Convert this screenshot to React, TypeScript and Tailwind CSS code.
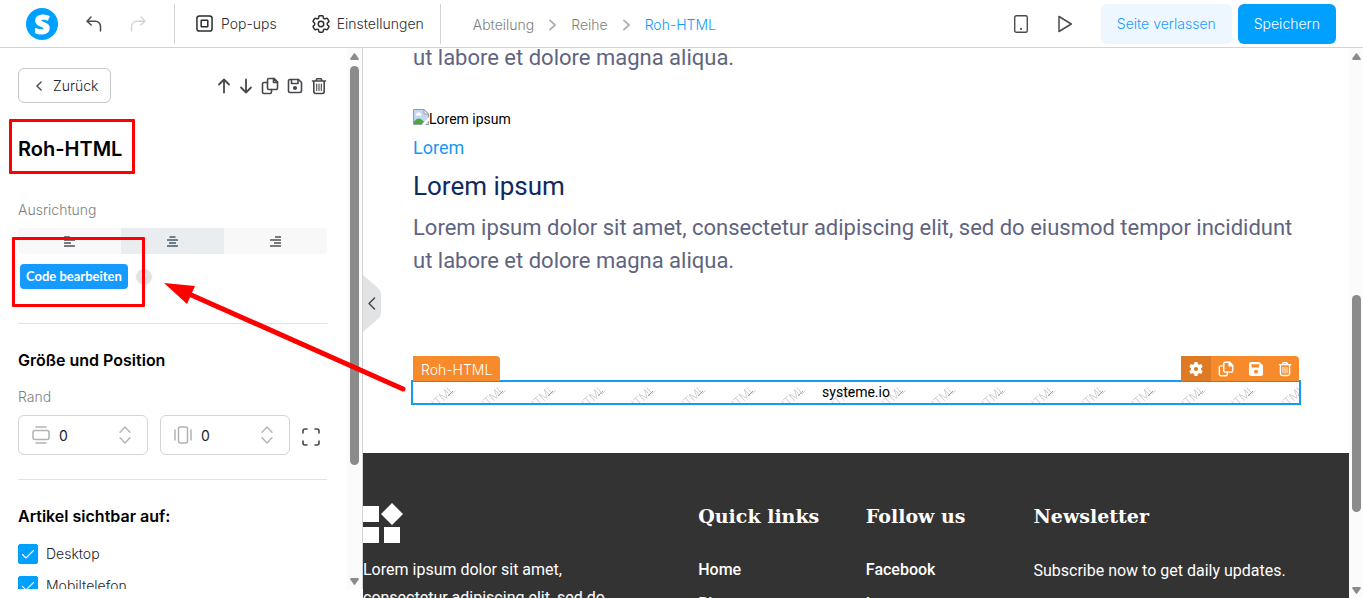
import React, { useState } from "react";

type IconProps = { className?: string };

const stroke = {
  fill: "none",
  stroke: "currentColor",
  strokeLinecap: "round" as const,
  strokeLinejoin: "round" as const,
};

function Logo() {
  return (
    <svg viewBox="0 0 32 32" className="size-8" role="img" aria-label="systeme.io">
      <circle cx="16" cy="16" r="16" fill="#00a0ff" />
      <text x="16" y="25.5" textAnchor="middle" fontFamily="Open Sans, sans-serif" fontWeight="800" fontSize="27" fill="#fff" stroke="#fff" strokeWidth="0.8">
        S
      </text>
    </svg>
  );
}

function UndoIcon({ className }: IconProps) {
  return (
    <svg viewBox="0 0 16 16" className={className} {...stroke} strokeWidth="1.5">
      <path d="M5 1 1 5.2 5.2 9M1 5.2h8.5a5 5 0 0 1 5 5V15" />
    </svg>
  );
}

function PopupIcon() {
  return (
    <svg viewBox="0 0 18 18" className="size-[17px]" {...stroke} strokeWidth="1.6">
      <rect x="1" y="1" width="16" height="16" rx="2.5" />
      <rect x="5.5" y="5.5" width="7" height="7" rx="0.5" />
    </svg>
  );
}

function GearOutline() {
  return (
    <svg viewBox="0 0 24 24" className="size-[22px]" {...stroke} strokeWidth="1.6">
      <path d="M9.6 3.9c.1-.5.6-.9 1.1-.9h2.6c.5 0 1 .4 1.1.9l.2 1.3c.1.4.3.7.6.9l.3.1c.3.2.7.3 1.1.1l1.2-.5c.5-.2 1.1 0 1.4.5l1.3 2.2c.3.5.2 1.1-.3 1.4l-1 .9c-.3.2-.4.6-.4 1v.4c0 .4.1.7.4 1l1 .8c.5.4.6 1 .3 1.4l-1.3 2.3c-.3.5-.9.7-1.4.5l-1.2-.5c-.4-.1-.8-.1-1.1.1l-.3.2c-.3.1-.5.5-.6.8l-.2 1.3c-.1.6-.6.9-1.1.9h-2.6c-.5 0-1-.3-1.1-.9l-.2-1.3c-.1-.3-.3-.7-.6-.8l-.3-.2c-.3-.2-.7-.2-1.1-.1l-1.2.5c-.5.2-1.1 0-1.4-.5l-1.3-2.3c-.3-.4-.2-1 .3-1.4l1-.8c.3-.3.4-.6.4-1v-.4c0-.4-.1-.8-.4-1l-1-.9c-.5-.3-.6-.9-.3-1.4l1.3-2.2c.3-.5.9-.7 1.4-.5l1.2.5c.4.1.8.1 1.1-.1l.3-.1c.3-.2.5-.5.6-.9z" />
      <circle cx="12" cy="12" r="3" />
    </svg>
  );
}

function Chevron({ className }: IconProps) {
  return (
    <svg viewBox="0 0 10 14" className={className} {...stroke}>
      <path d="m2 1.5 6 5.5-6 5.5" />
    </svg>
  );
}

function CopyIcon({ className }: IconProps) {
  return (
    <svg viewBox="0 0 18 18" className={className} {...stroke} strokeWidth="1.6">
      <path d="M8 1.5h5.2l3.3 3.3V11a1.5 1.5 0 0 1-1.5 1.5H8A1.5 1.5 0 0 1 6.5 11V3A1.5 1.5 0 0 1 8 1.5z" />
      <path d="M12.5 1.5v4h4zM6.5 5.5H3A1.5 1.5 0 0 0 1.5 7v8A1.5 1.5 0 0 0 3 16.5h6a1.5 1.5 0 0 0 1.5-1.5v-2.5" />
    </svg>
  );
}

function SaveIcon({ className }: IconProps) {
  return (
    <svg viewBox="0 0 16 16" className={className} {...stroke} strokeWidth="1.6">
      <path d="M3 1.5h8.5l3 3V13A1.5 1.5 0 0 1 13 14.5H3A1.5 1.5 0 0 1 1.500 13V3A1.5 1.5 0 0 1 3 1.5z" />
      <path d="M4.5 1.500v4h6.500v-4" />
      <circle cx="8" cy="10" r="1.3" fill="currentColor" />
    </svg>
  );
}

function SaveSolid() {
  return (
    <svg viewBox="0 0 16 16" className="size-4" fill="currentColor">
      <path
        fillRule="evenodd"
        d="M3 1h8.500L15 4.500V13a2 2 0 0 1-2 2H3a2 2 0 0 1-2-2V3a2 2 0 0 1 2-2zm.5 2.200v3.300h7.500V3.200zM8 8.800a2 2 0 1 0 0 4 2 2 0 0 0 0-4z"
      />
    </svg>
  );
}

function TrashIcon({ className }: IconProps) {
  return (
    <svg viewBox="0 0 16 18" className={className} {...stroke} strokeWidth="1.6">
      <path d="M1.500 4h13M5 4l.8-2.200h4.400L11 4M2.800 4v10.500a2 2 0 0 0 2 2h6.400a2 2 0 0 0 2-2V4" />
      <path d="M5.700 7v6.500M8 7v6.500M10.300 7v6.500" strokeWidth="1.1" />
    </svg>
  );
}

function GearSolid() {
  return (
    <svg viewBox="0 0 16 16" className="size-4" fill="currentColor">
      <path
        fillRule="evenodd"
        d="M6.500 1h3l.4 2 1.300.8 2-.7 1.500 2.600-1.600 1.400v1.800l1.600 1.400-1.500 2.600-2-.7-1.300.8-.4 2h-3l-.4-2-1.300-.8-2 .7-1.500-2.600 1.600-1.400V7.100L1.300 5.700l1.500-2.600 2 .7L6.100 3zM8 5.900a2.100 2.100 0 1 0 0 4.200 2.100 2.100 0 0 0 0-4.200z"
      />
    </svg>
  );
}

function AlignIcon({ side }: { side: "left" | "center" | "right" }) {
  const x = (w: number) => (side === "left" ? 0 : side === "right" ? 11 - w : (11 - w) / 2);
  return (
    <svg viewBox="0 0 11 11" className="size-[11px]" fill="currentColor">
      {[6, 11, 7, 11].map((w, i) => (
        <rect key={i} x={x(w)} y={i * 3} width={w} height="2" rx="0.5" />
      ))}
    </svg>
  );
}

function BrokenImage() {
  return (
    <svg viewBox="0 0 16 16" className="size-4">
      <path d="M.5.5H11l4.500 4.500v10.500H.5z" fill="#c3d6f5" stroke="#9a9a9a" />
      <path d="M11 .5V5h4.500z" fill="#fff" stroke="#9a9a9a" />
      <path d="M3 6.500a1.500 1.500 0 0 1 1.200-2.400 2 2 0 0 1 3.600.6 1.200 1.200 0 0 1 .2 2z" fill="#fff" />
      <path d="M1 15v-2.500q4-5 8-1.500l2 1.500L9 15z" fill="#4aa83f" />
      <path d="M8.500 16 16 8v3.500L12 16z" fill="#fff" />
    </svg>
  );
}

function Scrollbar({ before, thumb, after }: { before: string; thumb: string; after: string }) {
  return (
    <div aria-hidden="true" className="flex w-[14px] shrink-0 flex-col items-center bg-[#fbfbfb] pb-1 pt-[5px] text-[#8b8b8b]">
      <svg viewBox="0 0 9 7" className="h-[7px] w-[9px] shrink-0" fill="currentColor">
        <path d="M3.800.6a1 1 0 0 1 1.400 0L8.700 5.500Q9 7 8 7H1Q0 7 .3 5.500z" />
      </svg>
      <div className={before} />
      <div className={`w-[9px] rounded-full bg-[#8b8b8b] ${thumb}`} />
      <div className={after} />
      <svg viewBox="0 0 9 7" className="h-[7px] w-[9px] shrink-0" fill="currentColor">
        <path d="M3.800 6.400a1 1 0 0 0 1.400 0L8.700 1.500Q9 0 8 0H1Q0 0 .3 1.500z" />
      </svg>
    </div>
  );
}

function Header() {
  return (
    <header className="flex h-12 shrink-0 items-center border-b border-[#d3d3d3] bg-white pr-[27px] pl-[26px] text-sm font-light text-[#1c1d1f]">
      <Logo />
      <button aria-label="Rückgängig" className="ml-7 text-[#4a4b4d]">
        <UndoIcon className="size-4" />
      </button>
      <button aria-label="Wiederholen" className="ml-7 text-[#d5d6d7]">
        <UndoIcon className="size-4 -scale-x-100" />
      </button>
      <div className="ml-7 h-10 w-px bg-[#d3d3d3]" />
      <button className="ml-[21px] flex items-center gap-2 text-[#2c2d2f]">
        <PopupIcon />
        Pop-ups
      </button>
      <button className="ml-[33px] flex items-center gap-[5px] text-[#2c2d2f]">
        <GearOutline />
        Einstellungen
      </button>
      <div className="ml-4 h-10 w-px bg-[#d3d3d3]" />
      <nav aria-label="Pfad" className="ml-8 flex items-center gap-[14px] pt-0.5 text-[#7e7f80]">
        <a href="#abteilung">Abteilung</a>
        <Chevron className="h-3 w-[9px] stroke-2 text-[#adaeaf]" />
        <a href="#reihe">Reihe</a>
        <Chevron className="h-3 w-[9px] stroke-2 text-[#adaeaf]" />
        <a href="#roh-html" className="text-[#0a9bff]">
          Roh-HTML
        </a>
      </nav>
      <div className="ml-auto flex items-center">
        <button aria-label="Mobile Ansicht" className="text-[#4a4b4d]">
          <svg viewBox="0 0 14 18" className="h-[18px] w-[14px]" {...stroke} strokeWidth="1.4">
            <rect x="0.7" y="0.7" width="12.6" height="16.6" rx="1.6" />
            <path d="M7 13.800v.1" strokeWidth="2" />
          </svg>
        </button>
        <button aria-label="Vorschau" className="ml-[30px] text-[#4a4b4d]">
          <svg viewBox="0 0 14 18" className="h-[18px] w-[14px]" {...stroke} strokeWidth="1.5">
            <path d="M1 1.500v15L13.300 9z" />
          </svg>
        </button>
        <button className="ml-[29px] h-10 rounded-md bg-[#eef7ff] px-4 text-[#1a9cff]">Seite verlassen</button>
        <button className="ml-[6px] h-10 rounded-md bg-[#00a0ff] px-4 text-white">Speichern</button>
      </div>
    </header>
  );
}

function NumberField({ label, vertical }: { label: string; vertical?: boolean }) {
  const [value, setValue] = useState(0);
  return (
    <div className="flex h-10 w-[130px] items-center rounded-md border border-[#d3d4d5] pr-4 pl-[13px] text-[#b1b2b4]">
      <svg viewBox="0 0 18 18" className={vertical ? "size-[18px] shrink-0 rotate-90" : "size-[18px] shrink-0"} {...stroke} strokeWidth="1.5">
        <rect x="1" y="4.500" width="16" height="9" rx="2" />
        <path d="M4 1h10M4 17h10" />
      </svg>
      <input
        aria-label={label}
        type="text"
        inputMode="numeric"
        value={value}
        onChange={(e) => setValue(Number(e.target.value) || 0)}
        className="ml-[9px] w-0 min-w-0 flex-1 bg-transparent pt-0.5 text-sm text-[#1c1d1f] outline-none"
      />
      <div className="flex flex-col gap-1">
        <button aria-label={`${label} erhöhen`} onClick={() => setValue(value + 1)}>
          <svg viewBox="0 0 12 7" className="h-[7px] w-3" {...stroke} strokeWidth="1.3">
            <path d="M1 6.300 6 1l5 5.300" />
          </svg>
        </button>
        <button aria-label={`${label} verringern`} onClick={() => setValue(value - 1)}>
          <svg viewBox="0 0 12 7" className="h-[7px] w-3" {...stroke} strokeWidth="1.3">
            <path d="M1 .7 6 6l5-5.300" />
          </svg>
        </button>
      </div>
    </div>
  );
}

function CheckRow({ label }: { label: string }) {
  return (
    <label className="flex items-center gap-2 text-sm font-light text-[#1c1d1f]">
      <span className="grid size-5 shrink-0">
        <input type="checkbox" defaultChecked className="peer col-start-1 row-start-1 size-5 appearance-none rounded-[2px] border border-[#00a0ff] checked:bg-[#00a0ff]" />
        <svg viewBox="0 0 20 20" className="pointer-events-none invisible col-start-1 row-start-1 size-5 text-white peer-checked:visible" {...stroke} strokeWidth="1.1">
          <path d="m4.500 10.500 3.500 3.500 7.500-7.500" />
        </svg>
      </span>
      {label}
    </label>
  );
}

function Sidebar() {
  return (
    <aside className="mb-[9px] flex w-[363px] shrink-0 overflow-hidden border-r border-[#d3d3d3] bg-white pr-px">
      <div className="min-w-0 flex-1 pt-5 pr-5 pl-[18px]">
        <div className="flex items-center justify-between">
          <button className="flex h-[35px] items-center gap-[10px] rounded-md border border-[#c6c7c9] pr-3 pl-4 text-sm font-light text-[#1c1d1f]">
            <Chevron className="h-[10px] w-[8px] rotate-180 stroke-2 text-[#4a4b4d]" />
            Zurück
          </button>
          <div className="flex items-center gap-2 text-[#47484b]">
            <button aria-label="Nach oben">
              <svg viewBox="0 0 14 16" className="h-4 w-[14px]" {...stroke} strokeWidth="1.8">
                <path d="M7 14.500v-13M2 6.500l5-5 5 5" />
              </svg>
            </button>
            <button aria-label="Nach unten">
              <svg viewBox="0 0 14 16" className="h-4 w-[14px]" {...stroke} strokeWidth="1.8">
                <path d="M7 1.500v13M2 9.500l5 5 5-5" />
              </svg>
            </button>
            <button aria-label="Duplizieren">
              <CopyIcon className="size-[18px]" />
            </button>
            <button aria-label="Sichern">
              <SaveIcon className="size-4" />
            </button>
            <button aria-label="Löschen">
              <TrashIcon className="h-[18px] w-4" />
            </button>
          </div>
        </div>

        <h1 className="mt-8 text-xl leading-7 font-semibold text-black">Roh-HTML</h1>

        <p className="mt-[37px] text-sm leading-5 font-light text-[#7e7f80]">Ausrichtung</p>
        <div role="group" aria-label="Ausrichtung" className="mt-2 grid h-[26px] grid-cols-3 overflow-hidden rounded bg-[#f8f8f8] text-[#77797c]">
          <button aria-label="Links" className="grid place-items-center"><AlignIcon side="left" /></button>
          <button aria-label="Zentriert" className="grid place-items-center bg-[#e9edf0] text-[#6f7d89]"><AlignIcon side="center" /></button>
          <button aria-label="Rechts" className="grid place-items-center"><AlignIcon side="right" /></button>
        </div>

        <div className="mt-[10px] flex items-center gap-2 pl-0.5">
          <button className="h-[25px] rounded bg-[#159bff] px-1.5 font-[Lato,sans-serif] text-[13px] font-bold whitespace-nowrap text-white">Code bearbeiten</button>
          <button aria-label="Hilfe" className="grid size-4 place-items-center rounded-full bg-[#e2e3e5] text-[10px] leading-4 font-bold text-white">?</button>
        </div>

        <hr className="mt-[34px] border-[#e2e3e5]" />

        <h2 className="mt-6 text-base leading-6 font-semibold text-black">Größe und Position</h2>
        <p className="mt-[15px] text-sm leading-5 font-light text-[#7e7f80]">Rand</p>
        <div className="mt-2 flex items-center gap-3">
          <NumberField label="Vertikaler Rand" />
          <NumberField label="Horizontaler Rand" vertical />
          <button aria-label="Alle Seiten" className="mt-1 text-[#47484b]">
            <svg viewBox="0 0 18 18" className="size-[18px]" {...stroke} strokeWidth="1.6">
              <path d="M1 5V3a2 2 0 0 1 2-2h2M13 1h2a2 2 0 0 1 2 2v2M17 13v2a2 2 0 0 1-2 2h-2M5 17H3a2 2 0 0 1-2-2v-2" />
            </svg>
          </button>
        </div>

        <hr className="mt-6 border-[#e2e3e5]" />

        <h2 className="mt-6 text-base leading-6 font-semibold text-black">Artikel sichtbar auf:</h2>
        <div className="mt-4 flex flex-col gap-3">
          <CheckRow label="Desktop" />
          <CheckRow label="Mobiltelefon" />
        </div>
      </div>
      <Scrollbar before="h-[6px] shrink-0" thumb="h-[399px] shrink-0" after="flex-1" />
    </aside>
  );
}

function SelectedBlock() {
  return (
    <div className="mt-[79px]">
      <div className="flex items-end justify-between">
        <span className="h-[25px] rounded-tr bg-[#f78a2a] px-2 font-[Inter,sans-serif] text-sm leading-7 font-light text-white">Roh-HTML</span>
        <div className="flex h-[25px] items-center overflow-hidden rounded-tr bg-[#f78a2a] text-white">
          <button aria-label="Einstellungen" className="grid h-full w-[30px] place-items-center bg-[#df7a24]"><GearSolid /></button>
          <button aria-label="Duplizieren" className="grid h-full w-[30px] place-items-center"><CopyIcon className="size-4" /></button>
          <button aria-label="Sichern" className="grid h-full w-[30px] place-items-center"><SaveSolid /></button>
          <button aria-label="Löschen" className="grid h-full w-7 place-items-center"><TrashIcon className="h-4 w-[14px]" /></button>
        </div>
      </div>
      <div className="-mx-0.5 -mt-px grid h-[25px] border-2 border-[#159bf5]">
        <svg aria-hidden="true" className="col-start-1 row-start-1 h-[21px] w-full">
          <defs>
            <pattern id="markup" width="50" height="50" patternUnits="userSpaceOnUse">
              <text transform="translate(19 30) rotate(-42)" fontFamily="Roboto, sans-serif" fontWeight="300" fontSize="12" fill="#c8c8c8">
                HTML
              </text>
              <path d="m35 14 5-5" stroke="#a0a0a0" />
            </pattern>
          </defs>
          <rect width="100%" height="100%" fill="url(#markup)" />
        </svg>
        <p className="col-start-1 row-start-1 text-center text-sm leading-5 text-black">systeme.io</p>
      </div>
    </div>
  );
}

const LOREM_END = "ut labore et dolore magna aliqua.";
const LOREM = `Lorem ipsum dolor sit amet, consectetur adipiscing elit, sed do eiusmod tempor incididunt ${LOREM_END}`;

function FooterHeading({ children }: { children: string }) {
  return <h3 className="font-['Roboto_Slab','DejaVu_Serif',serif] text-[19px] leading-[26px] font-bold">{children}</h3>;
}

function FooterLinks({ items }: { items: string[] }) {
  return (
    <ul className="mt-[29px] flex flex-col gap-2.5 font-medium">
      {items.map((item) => (
        <li key={item}>
          <a href={`#${item.toLowerCase()}`}>{item}</a>
        </li>
      ))}
    </ul>
  );
}

function Canvas() {
  return (
    <main className="flex min-w-0 flex-1 flex-col overflow-hidden bg-white font-[Roboto,sans-serif]">
      <div className="-mt-[7px] shrink-0 px-[50px]">
        <p className="text-[22px] leading-[33px] text-[#606480]">{LOREM_END}</p>
        <div className="mt-[35px] flex items-start text-sm leading-5 text-black">
          <BrokenImage />
          Lorem ipsum
        </div>
        <p className="mt-[5px] text-lg leading-7 text-[#1a97f5]">Lorem</p>
        <h2 className="mt-[6px] text-[26px] leading-9 text-[#0f2a60]">Lorem ipsum</h2>
        <p className="mt-[7px] text-[22px] leading-[33px] text-[#606480]">{LOREM}</p>
        <SelectedBlock />
      </div>
      <footer className="mt-12 grid flex-1 grid-cols-[34%_17%_17%_32%] overflow-hidden bg-[#333333] pt-[50px] text-base text-white">
        <div className="pr-20">
          <svg viewBox="0 0 40 40" className="size-10" fill="#fff" role="img" aria-label="Logo">
            <path d="M0 3h16v16H0zM0 24h16v16H0zM21 24h16v16H21zM29 0l11 11-11 11-11-11z" />
          </svg>
          <p className="mt-[13px] leading-7">Lorem ipsum dolor sit amet, consectetur adipiscing elit, sed do</p>
        </div>
        <div>
          <FooterHeading>Quick links</FooterHeading>
          <FooterLinks items={["Home", "Blog"]} />
        </div>
        <div>
          <FooterHeading>Follow us</FooterHeading>
          <FooterLinks items={["Facebook", "Instagram"]} />
        </div>
        <div>
          <FooterHeading>Newsletter</FooterHeading>
          <p className="mt-[30px] whitespace-nowrap">Subscribe now to get daily updates.</p>
        </div>
      </footer>
    </main>
  );
}

function Annotations() {
  return (
    <div aria-hidden="true" className="pointer-events-none">
      <div className="absolute top-[119px] left-[9px] h-[55px] w-[126px] rounded-[1px] border-3 border-[#ff0000]" />
      <div className="absolute top-[237px] left-[12px] h-[70px] w-[133px] rounded-[1px] border-3 border-[#ff0000]" />
      <svg viewBox="0 0 245 112" className="absolute top-[281px] left-[163px] h-[112px] w-[245px]">
        <path d="M1 2 32 5 24 23z" fill="#ff0000" />
        <path d="M26 13 240 108" stroke="#ff0000" strokeWidth="5" strokeLinecap="round" />
      </svg>
    </div>
  );
}

export default function App() {
  return (
    <div className="relative flex h-screen flex-col overflow-hidden bg-white font-[Inter,sans-serif]">
      <Header />
      <div className="flex min-h-0 flex-1">
        <Sidebar />
        <Canvas />
        <Scrollbar before="flex-[235]" thumb="flex-[216]" after="flex-[75]" />
      </div>
      <button aria-label="Seitenleiste einklappen" className="absolute top-[275px] left-[363px] text-[#47484b]">
        <svg viewBox="0 0 18 57" className="h-[57px] w-[18px]">
          <path d="M0 0 15 13Q18 16 18 19V38Q18 41 15 44L0 57z" fill="#e1e3e5" />
          <path d="M11.500 23 6 28.500l5.500 5.500" {...stroke} strokeWidth="1.5" />
        </svg>
      </button>
      <Annotations />
    </div>
  );
}
